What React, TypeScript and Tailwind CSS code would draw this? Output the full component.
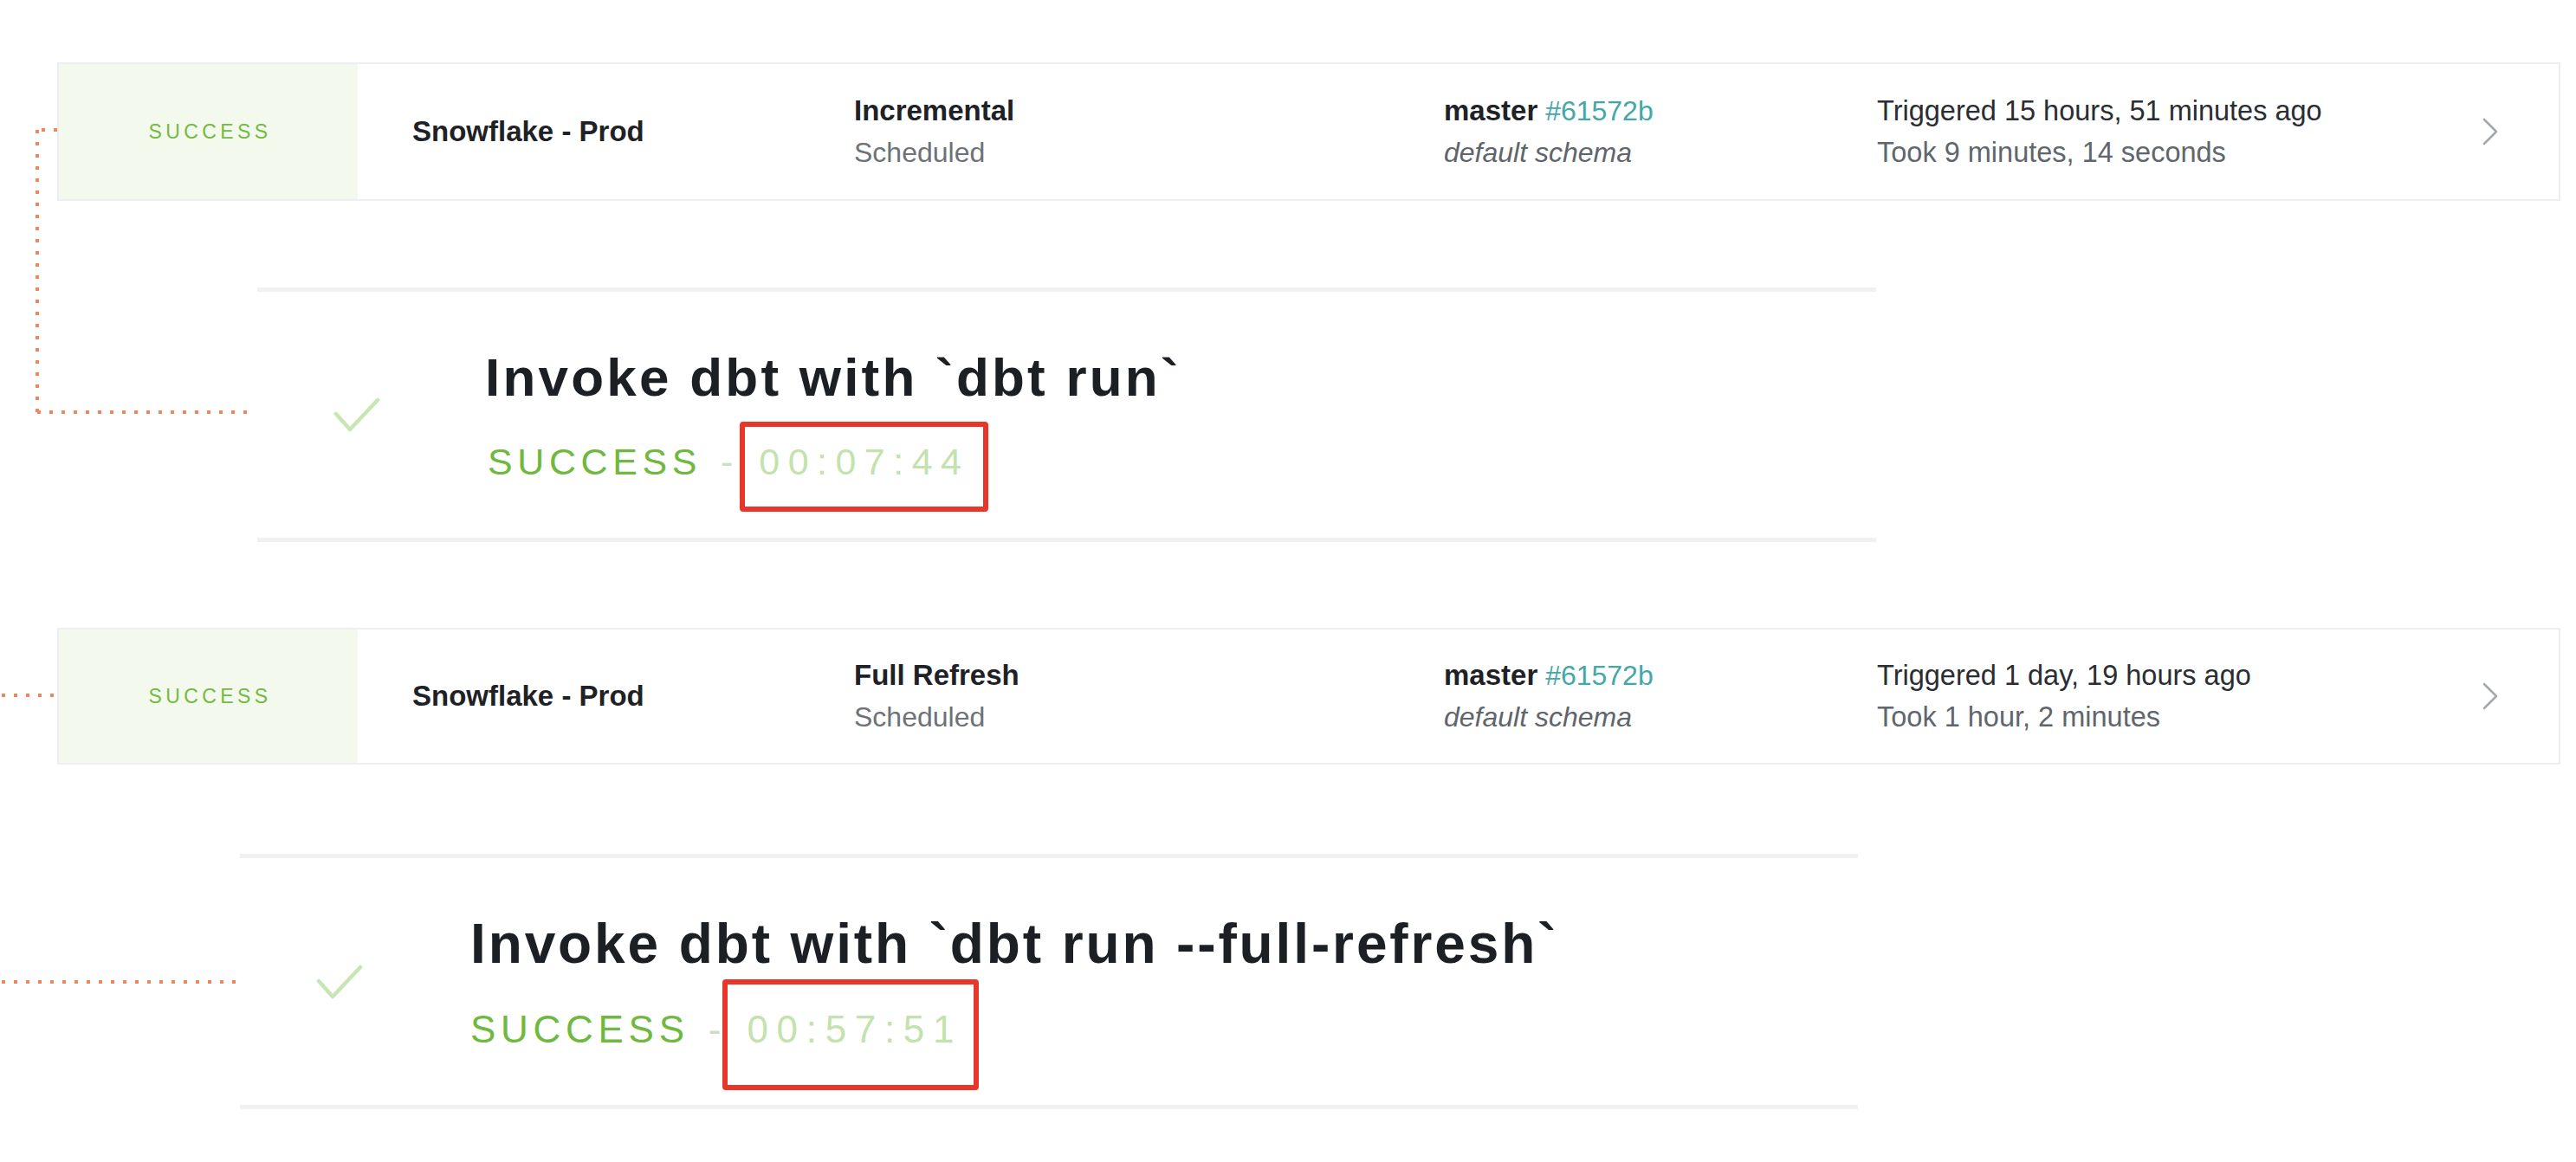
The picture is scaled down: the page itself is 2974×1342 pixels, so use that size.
interface Run {
  name: string;
  type: string;
  branch: string;
  sha: string;
  schema: string;
  triggered: string;
  took: string;
}

const runs: Run[] = [
  {
    name: "Snowflake - Prod",
    type: "Incremental",
    branch: "master",
    sha: "#61572b",
    schema: "default schema",
    triggered: "Triggered 15 hours, 51 minutes ago",
    took: "Took 9 minutes, 14 seconds",
  },
  {
    name: "Snowflake - Prod",
    type: "Full Refresh",
    branch: "master",
    sha: "#61572b",
    schema: "default schema",
    triggered: "Triggered 1 day, 19 hours ago",
    took: "Took 1 hour, 2 minutes",
  },
];

function RunRow({ run, className }: { run: Run; className: string }) {
  return (
    <div className={`flex border-2 border-[#eceef1] bg-white ${className}`}>
      <div className="flex w-[345px] shrink-0 items-center justify-center bg-[#f3f9ec] pl-[4px] text-[23px] tracking-[0.19em] text-[#72ba42]">
        SUCCESS
      </div>
      <div className="flex w-[573px] shrink-0 items-center pl-[63px] text-[33px] font-bold text-[#1e2226]">
        {run.name}
      </div>
      <div className="flex w-[681px] shrink-0 flex-col justify-center leading-[48px]">
        <span className="text-[33px] font-bold text-[#1e2226]">{run.type}</span>
        <span className="text-[32px] text-[#6c7278]">Scheduled</span>
      </div>
      <div className="flex w-[500px] shrink-0 flex-col justify-center leading-[48px]">
        <span className="text-[32px]">
          <span className="text-[33px] font-bold text-[#1e2226]">{run.branch}</span>{" "}
          <span className="text-[#44a7a8]">{run.sha}</span>
        </span>
        <span className="text-[32px] italic text-[#5f656c]">{run.schema}</span>
      </div>
      <div className="flex flex-1 flex-col justify-center text-[32.5px] leading-[48px]">
        <span className="text-[#2a2e33]">{run.triggered}</span>
        <span className="text-[#60666d]">{run.took}</span>
      </div>
      <div className="flex items-center pr-[70px]">
        <svg className="h-[32px] w-[18px]" viewBox="0 0 18 32" fill="none">
          <polyline
            points="2,2 16,16 2,30"
            stroke="#a4a9ae"
            strokeWidth="2.6"
            strokeLinecap="round"
            strokeLinejoin="round"
          />
        </svg>
      </div>
    </div>
  );
}

interface Step {
  title: string;
  time: string;
  card: string;
  titleCls: string;
  statusCls: string;
  dashCls: string;
  boxCls: string;
}

const steps: Step[] = [
  {
    title: "Invoke dbt with `dbt run`",
    time: "00:07:44",
    card: "mt-[100px] ml-[297px] h-[294px] w-[1869px]",
    titleCls: "ml-[-3px] text-[62px] leading-[72px] tracking-[0.052em]",
    statusCls: "mt-[35px] text-[43px]",
    dashCls: "ml-[22px] mr-[30px]",
    boxCls: "-left-[22px] -right-[22px] -top-[20px] -bottom-[32px]",
  },
  {
    title: "Invoke dbt with `dbt run --full-refresh`",
    time: "00:57:51",
    card: "mt-[103px] ml-[277px] h-[295px] w-[1868px]",
    titleCls: "text-[64px] leading-[74px] tracking-[0.045em]",
    statusCls: "mt-[36px] text-[44px]",
    dashCls: "ml-[22px] mr-[30px]",
    boxCls: "-left-[28px] -right-[19px] -top-[32px] -bottom-[44px]",
  },
];

function StepCard({ step }: { step: Step }) {
  return (
    <div className={`flex items-center border-y-[5px] border-[#eff1f3] bg-white ${step.card}`}>
      <svg className="ml-[88px] h-[40px] w-[54px] shrink-0" viewBox="0 0 54 40" fill="none">
        <polyline
          points="3,19 19,37 51,3"
          stroke="#c8e6b4"
          strokeWidth="4.5"
          strokeLinecap="round"
          strokeLinejoin="round"
        />
      </svg>
      <div className="ml-[124px] flex flex-col">
        <div className={`font-bold text-[#1c2025] ${step.titleCls}`}>{step.title}</div>
        <div className={`flex items-baseline leading-[52px] ${step.statusCls}`}>
          <span className="tracking-[0.13em] text-[#70b93f]">SUCCESS</span>
          <span className={`text-[#cddfc2] ${step.dashCls}`}>-</span>
          <span className="relative inline-block tracking-[0.22em] text-[#c3e2ac]">
            {step.time}
            <span className={`absolute rounded-[4px] border-[6px] border-[#e8362b] ${step.boxCls}`} />
          </span>
        </div>
      </div>
    </div>
  );
}

function Connectors() {
  const dot = { stroke: "#f0875b", strokeWidth: 4, strokeDasharray: "4 10" };
  return (
    <svg className="pointer-events-none absolute inset-0 h-full w-full" fill="none">
      <line x1="66" y1="150" x2="43" y2="150" {...dot} />
      <line x1="43" y1="150" x2="43" y2="476" {...dot} />
      <line x1="43" y1="476" x2="290" y2="476" {...dot} />
      <line x1="2" y1="803" x2="66" y2="803" {...dot} />
      <line x1="2" y1="1134" x2="278" y2="1134" {...dot} />
    </svg>
  );
}

export default function App() {
  return (
    <div
      className="relative h-[1342px] w-[2974px] overflow-hidden bg-white"
      style={{ fontFamily: '"Liberation Sans", Arial, sans-serif' }}
    >
      <div className="flex flex-col pt-[72px]">
        <RunRow run={runs[0]} className="ml-[66px] h-[160px] w-[2890px]" />
        <StepCard step={steps[0]} />
        <RunRow run={runs[1]} className="mt-[99px] ml-[66px] h-[158px] w-[2890px]" />
        <StepCard step={steps[1]} />
      </div>
      <Connectors />
    </div>
  );
}
